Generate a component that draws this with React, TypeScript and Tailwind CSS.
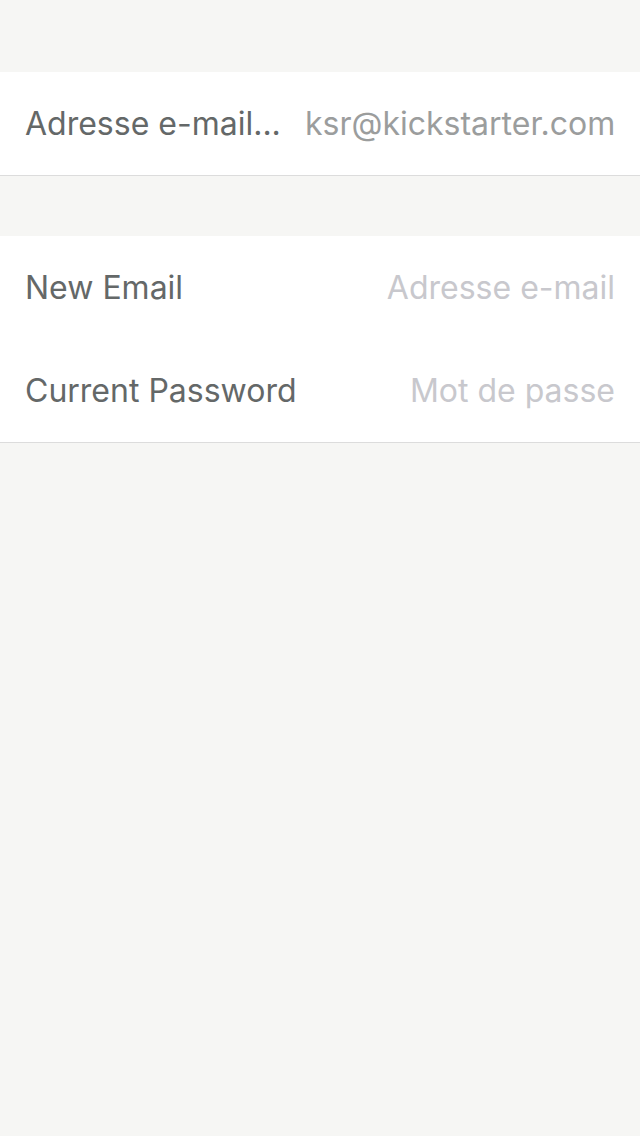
import React from 'react';

const font = { fontFamily: 'Inter, "Noto Sans", sans-serif' };

function Row({ label, value, placeholder, truncate }: { label: string; value?: string; placeholder?: string; truncate?: boolean }) {
  return (
    <div className="flex items-center justify-between h-[103px] px-[25px] gap-[24px]">
      <span className={`text-[32px] text-[#646868] whitespace-nowrap ${truncate ? 'truncate w-[256px] shrink-0' : ''}`}>
        {label}
      </span>
      {value ? (
        <span className="text-[32px] text-[#9b9d9d] whitespace-nowrap">{value}</span>
      ) : (
        <input
          readOnly
          placeholder={placeholder}
          className="flex-1 min-w-0 text-right text-[32px] bg-transparent outline-none placeholder:text-[#c8c8cd]"
          style={font}
        />
      )}
    </div>
  );
}

export default function App() {
  return (
    <div className="min-h-[1136px] bg-[#f6f6f4] pt-[72px]" style={font}>
      <div className="bg-white border-b border-[#dcdcdc]">
        <Row label="Adresse e-mail..." value="ksr@kickstarter.com" truncate />
      </div>
      <div className="h-[60px]" />
      <div className="bg-white border-b border-[#dcdcdc]">
        <Row label="New Email" placeholder="Adresse e-mail" />
        <Row label="Current Password" placeholder="Mot de passe" />
      </div>
    </div>
  );
}
